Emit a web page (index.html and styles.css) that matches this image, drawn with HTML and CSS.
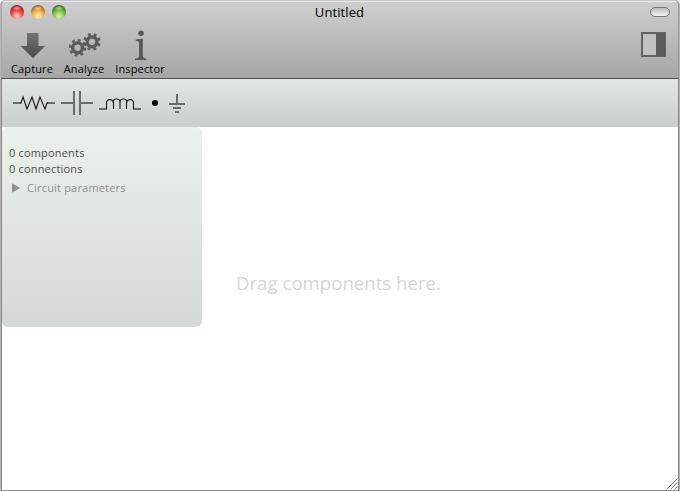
FILE: index.html
```
<!DOCTYPE html>
<html lang="en">
<head>
<meta charset="utf-8">
<title>Untitled</title>
<link rel="stylesheet" href="styles.css">
</head>
<body>
<div class="window">
  <header class="chrome">
    <div class="titlebar">
      <div class="lights"><i class="light red"></i><i class="light amber"></i><i class="light green"></i></div>
      <h1><span>Untitled</span></h1>
      <i class="pill"></i>
    </div>
    <div class="actions">
      <div class="action capture">
        <svg width="26" height="32" viewBox="0 0 26 32"><defs><linearGradient id="g" x2="0" y2="1"><stop stop-color="#737373"/><stop offset="1" stop-color="#4b4b4b"/></linearGradient></defs><path d="M8 5H19.5V18H26L14 30L1.5 18H8Z" fill="url(#g)"/></svg>
        <span>Capture</span>
      </div>
      <div class="action analyze">
        <svg width="34" height="32" viewBox="0 0 34 32" fill="none" stroke="#5b5b5b">
          <g transform="translate(10.6 19.8)"><circle r="4.9" stroke-width="3.4"/><circle r="7.5" stroke-width="2.6" stroke-dasharray="2.85 3.04"/></g>
          <g transform="translate(25 13.8) rotate(12)"><circle r="4.9" stroke-width="3.4"/><circle r="7.5" stroke-width="2.6" stroke-dasharray="2.85 3.04"/></g>
        </svg>
        <span>Analyze</span>
      </div>
      <div class="action inspector">
        <svg width="14" height="32" viewBox="0 0 14 32" fill="#585858"><circle cx="8" cy="5.3" r="2.7"/><path d="M2.7 11.6L9.8 10.8V28Q9.8 30.2 13.5 30.7V32H2V30.7Q6.1 30.3 6.1 28V15Q6.1 12.9 2.7 12.7Z"/></svg>
        <span>Inspector</span>
      </div>
      <svg class="sidebar-icon" width="25" height="25" viewBox="0 0 25 25"><path d="M1 1H24V24H1Z" fill="#c1c1c1" stroke="#626262" stroke-width="2"/><path d="M15 1H24V24H15Z" fill="#5c5c5c"/></svg>
    </div>
  </header>
  <nav class="parts">
    <svg width="42" height="28" viewBox="0 0 42 28"><path class="lead" d="M0 14H8M34 14H42"/><path class="curve" d="M7 14H8L10 8L14 20L19 8L23 20L27 8L32 20L34 14H35"/></svg>
    <svg width="32" height="28" viewBox="0 0 32 28"><path class="lead" d="M0 14H13M13 2V26M19 2V26M19 14H32"/></svg>
    <svg width="42" height="28" viewBox="0 0 42 28"><path class="lead" d="M0 20H8M34 20H42"/><path class="curve" d="M7.5 20V13.5C7.5 9.5 14.5 9.5 14.5 14.5V20M14.5 14.5C12 8.5 23 8.5 21 14.5V20M21 14.5C19 8.5 30 8.5 27.5 14.5V20M27.5 14.5C27.5 9.5 34.5 9.5 34.5 13.5V20"/></svg>
    <svg class="node" width="6" height="28" viewBox="0 0 6 28"><circle cx="3" cy="14" r="3"/></svg>
    <svg class="ground" width="16" height="28" viewBox="0 0 16 28"><path class="lead" d="M8 5V15M0 15H16M4 19H12M6 23H10"/></svg>
  </nav>
  <main>
    <aside>
      <p>0 components</p>
      <p>0 connections</p>
      <div class="disclosure"><svg width="8" height="10" viewBox="0 0 8 10"><path d="M0 .2L8 5L0 9.8Z" fill="#8d908e"/></svg><span>Circuit parameters</span></div>
    </aside>
    <p class="hint"><span>Drag components here.</span></p>
    <svg class="grip" width="12" height="12" viewBox="0 0 12 12" stroke="#777" stroke-width="1"><path d="M.5 11.5L11.5 .5M4.5 11.5L11.5 4.5M8.5 11.5L11.5 8.5"/></svg>
  </main>
</div>
</body>
</html>
```
FILE: styles.css
```
* { box-sizing: border-box; }
body { margin: 0; background: #fff; font-family: "Open Sans", sans-serif; overflow: hidden; }
p, h1 { margin: 0; font-weight: 400; }
svg { display: block; }
.window { width: 680px; height: 491px; display: flex; flex-direction: column; position: relative; background: #b4b4b4; padding: 0 1px; border-radius: 5px 5px 0 0; overflow: hidden; }
.chrome { height: 79px; border-top: 1px solid #c7c7c7; border-bottom: 1px solid #505050; border-left: 1px solid #aaa; border-right: 1px solid #999; border-radius: 5px 5px 0 0; background: linear-gradient(#e9e9e9 0 1px, #cecece 1px, #a6a6a6); }
.titlebar { height: 21px; padding: 0 8px; display: grid; grid-template-columns: 60px 1fr 60px; align-items: center; }
.lights { display: flex; gap: 7px; }
.light { width: 14px; height: 14px; border-radius: 50%; }
.red { background: radial-gradient(ellipse 5px 2.5px at 50% 22%, #fff9, transparent), radial-gradient(circle at 50% 80%, #ffb3ad 0 10%, #ee4444 45%, #9c1c22 75%); }
.amber { background: radial-gradient(ellipse 5px 2.5px at 50% 22%, #fff9, transparent), radial-gradient(circle at 50% 80%, #ffe29b 0 12%, #f4aa42 45%, #9a581d 78%); }
.green { background: radial-gradient(ellipse 5px 2.5px at 50% 22%, #fff9, transparent), radial-gradient(circle at 50% 80%, #c7ec8e 0 12%, #72b946 45%, #2f6b1a 78%); }
h1 { font-size: 13px; line-height: 20px; text-align: center; color: #000; }
h1 span { font-weight: 500; letter-spacing: .1px; margin-right: 1px; }
.pill { justify-self: end; width: 20px; height: 10px; border: 1px solid #777; border-radius: 5px; background: linear-gradient(#bbb, #f2f2f2); }
.actions { display: flex; height: 55px; padding: 6px 12px 0 8px; align-items: flex-start; }
.action { display: flex; flex-direction: column; align-items: center; }
.action svg { margin-bottom: 1px; }
.action span { font-size: 11px; line-height: 16px; white-space: nowrap; color: #000; font-weight: 500; letter-spacing: .15px; }
.capture { width: 44px; }
.analyze { width: 44px; margin-left: 8px; }
.inspector { width: 52px; margin-left: 8px; }
.sidebar-icon { margin: 4px 0 0 auto; }
.parts { height: 48px; margin: 0 1px; padding: 10px 11px; display: flex; align-items: flex-start; background: linear-gradient(#e1e8e3, #c8cfc8); gap: 6px; }
.lead { fill: none; stroke: #686d69; stroke-width: 2; }
.curve { fill: none; stroke: #151515; stroke-width: 1.1; }
.node, .ground { margin-left: 5px; }
main { flex: 1; margin: 0 1px; border-bottom: 1px solid #8c8c8c; background: #fff; display: flex; position: relative; }
.window::before, .window::after { content: ""; position: absolute; top: 79px; bottom: 0; width: 1px; background: #898989; z-index: 1; }
.window::before { left: 1px; }
.window::after { right: 1px; }
aside { width: 200px; height: 200px; padding: 18px 7px; border-radius: 6px; background: linear-gradient(#ebf1ec, #d4d9d5); color: #4c4c4c; font-size: 11px; line-height: 16px; font-weight: 500; letter-spacing: .18px; }
.disclosure { display: flex; align-items: center; gap: 7px; margin-top: 3px; padding-left: 3px; color: #8c8f8d; }
.hint { margin: 142px 0 0 34px; color: #d6d6d6; font-size: 18.5px; font-weight: 500; line-height: 28px; letter-spacing: .07px; white-space: nowrap; }
.grip { position: absolute; right: 0; bottom: 0; }
```
